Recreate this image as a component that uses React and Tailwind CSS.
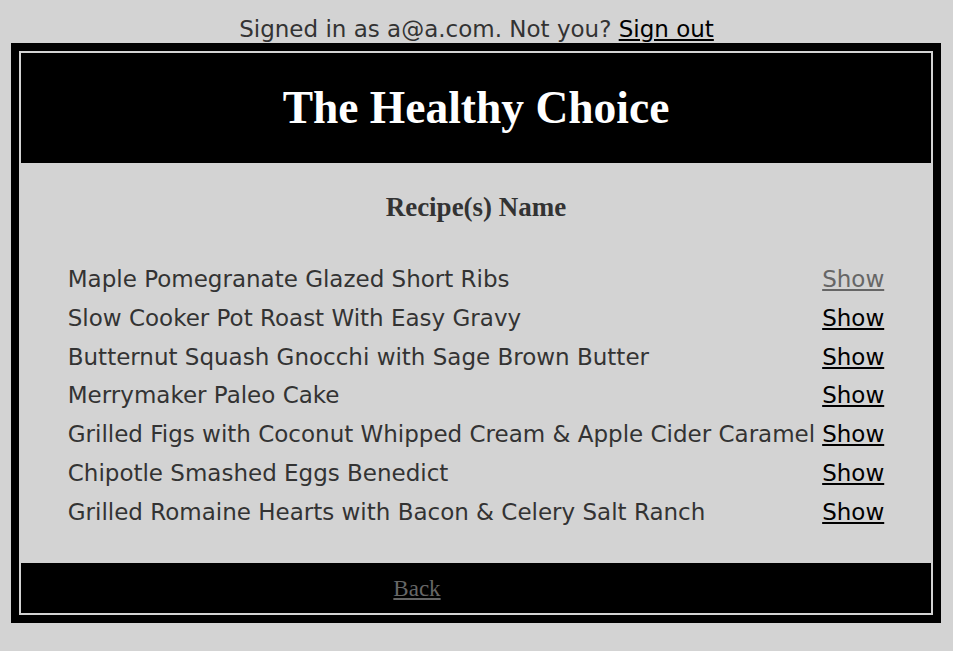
import React from 'react';

const recipes = [
  { name: 'Maple Pomegranate Glazed Short Ribs', visited: true },
  { name: 'Slow Cooker Pot Roast With Easy Gravy' },
  { name: 'Butternut Squash Gnocchi with Sage Brown Butter' },
  { name: 'Merrymaker Paleo Cake' },
  { name: 'Grilled Figs with Coconut Whipped Cream & Apple Cider Caramel' },
  { name: 'Chipotle Smashed Eggs Benedict' },
  { name: 'Grilled Romaine Hearts with Bacon & Celery Salt Ranch' },
];

export default function App() {
  return (
    <div className="min-h-[651px] bg-[#d3d3d3] font-['DejaVu_Sans',sans-serif] text-[#333]">
      <div className="h-[43px] flex items-end justify-center text-[23px] leading-[27px]">
        <span>
          Signed in as a@a.com. Not you?{' '}
          <a href="#" className="text-black underline">Sign out</a>
        </span>
      </div>

      <div className="ml-[11px] w-[930px] border-[8px] border-black bg-[#d3d3d3] p-[2px]">
        <div className="h-[110px] bg-black flex items-center justify-center">
          <h1 className="font-['Liberation_Serif',serif] font-bold text-[45.5px] leading-none text-white">
            The Healthy Choice
          </h1>
        </div>

        <div className="mt-[2px] h-[396px] flex flex-col items-center">
          <h2 className="mt-[27px] font-['Liberation_Serif',serif] font-bold text-[27px] leading-[31px] text-[#333]">
            Recipe(s) Name
          </h2>
          <div className="mt-[37px] grid grid-cols-[auto_auto] gap-x-[7px] text-[23px] leading-[38.8px]">
            {recipes.map((r) => (
              <React.Fragment key={r.name}>
                <span className="whitespace-nowrap">{r.name}</span>
                <a
                  href="#"
                  className={r.visited ? 'underline text-[#666]' : 'underline text-black'}
                >
                  Show
                </a>
              </React.Fragment>
            ))}
          </div>
        </div>

        <div className="mt-[2px] h-[50px] bg-black flex items-center pt-[3px]">
          <div className="w-[792px] text-center">
            <a href="#" className="font-['Liberation_Serif',serif] text-[23px] leading-none text-[#666] underline">
              Back
            </a>
          </div>
        </div>
      </div>
    </div>
  );
}
